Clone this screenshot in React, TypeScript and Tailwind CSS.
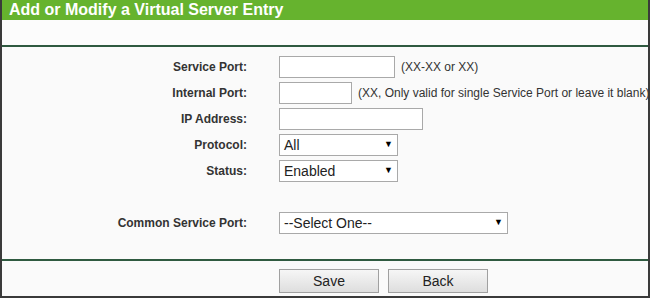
import type { ReactNode } from 'react'

const font = { fontFamily: '"Liberation Sans", Arial, sans-serif' }

function Row({ label, children }: { label: string; children: ReactNode }) {
  return (
    <div className="flex items-center h-[22px] mb-[4px]">
      <div className="w-[245px] shrink-0 text-right text-[12px] font-bold text-[#333]">{label}</div>
      <div className="ml-[32px] flex items-center whitespace-nowrap">{children}</div>
    </div>
  )
}

function TextBox({ width }: { width: string }) {
  return <div className={`${width} h-[22px] border border-[#a9a9a9] bg-white`} />
}

function Select({ value, width }: { value: string; width: string }) {
  return (
    <div
      className={`${width} h-[22px] border border-[#a9a9a9] bg-white flex items-center justify-between pl-[4px] pr-[4px] text-[14px] text-[#222]`}
    >
      <span>{value}</span>
      <span className="text-[9px] text-black">▼</span>
    </div>
  )
}

function Hint({ children }: { children: ReactNode }) {
  return <span className="ml-[6px] text-[12px] text-[#333]">{children}</span>
}

function Button({ label }: { label: string }) {
  return (
    <button className="w-[100px] h-[24px] border border-[#a0a0a0] bg-gradient-to-b from-[#f6f6f6] to-[#dedede] text-[14px] text-[#222]">
      {label}
    </button>
  )
}

export default function App() {
  return (
    <div style={font} className="w-[650px] h-[298px] overflow-hidden bg-[#fafafa]">
      <div className="h-[298px] border-l-2 border-r-2 border-b-2 border-[#3a3a3a] flex flex-col overflow-hidden">
        {/* Header */}
        <div className="h-[20px] bg-[#66b32e] pl-[7px] flex items-center">
          <span className="text-white font-bold text-[16px] leading-none">Add or Modify a Virtual Server Entry</span>
        </div>
        <div className="h-[27px] bg-[#fcfcfc] border-b-2 border-[#2f5a40]" />

        {/* Form */}
        <div className="pt-[9px] h-[214px] border-b-2 border-[#2f5a40]">
          <Row label="Service Port:">
            <TextBox width="w-[116px]" />
            <Hint>(XX-XX or XX)</Hint>
          </Row>
          <Row label="Internal Port:">
            <TextBox width="w-[73px]" />
            <Hint>(XX, Only valid for single Service Port or leave it blank)</Hint>
          </Row>
          <Row label="IP Address:">
            <TextBox width="w-[144px]" />
          </Row>
          <Row label="Protocol:">
            <Select value="All" width="w-[119px]" />
          </Row>
          <Row label="Status:">
            <Select value="Enabled" width="w-[119px]" />
          </Row>
          <div className="h-[26px]" />
          <Row label="Common Service Port:">
            <Select value="--Select One--" width="w-[229px]" />
          </Row>
        </div>

        {/* Buttons */}
        <div className="flex gap-[9px] pl-[277px] pt-[8px]">
          <Button label="Save" />
          <Button label="Back" />
        </div>
      </div>
    </div>
  )
}
